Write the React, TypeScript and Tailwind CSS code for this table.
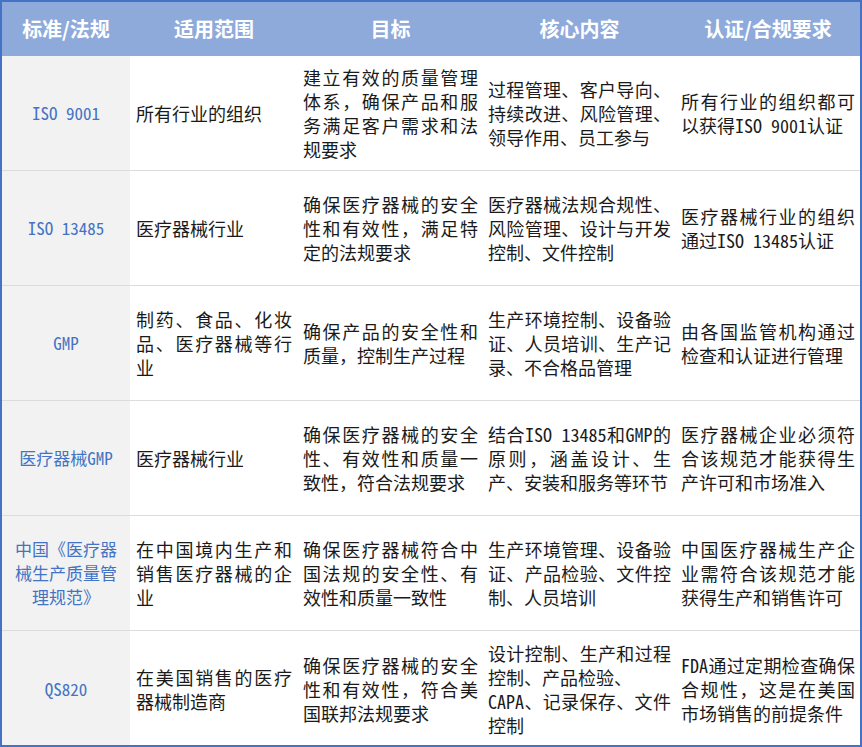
import React from "react";

type Row = { name: string; scope: string; goal: string; core: string; cert: string };

const rows: Row[] = [
  {
    name: "ISO 9001",
    scope: "所有行业的组织",
    goal: "建立有效的质量管理体系，确保产品和服务满足客户需求和法规要求",
    core: "过程管理、客户导向、持续改进、风险管理、领导作用、员工参与",
    cert: "所有行业的组织都可以获得ISO 9001认证",
  },
  {
    name: "ISO 13485",
    scope: "医疗器械行业",
    goal: "确保医疗器械的安全性和有效性，满足特定的法规要求",
    core: "医疗器械法规合规性、风险管理、设计与开发控制、文件控制",
    cert: "医疗器械行业的组织通过ISO 13485认证",
  },
  {
    name: "GMP",
    scope: "制药、食品、化妆品、医疗器械等行业",
    goal: "确保产品的安全性和质量，控制生产过程",
    core: "生产环境控制、设备验证、人员培训、生产记录、不合格品管理",
    cert: "由各国监管机构通过检查和认证进行管理",
  },
  {
    name: "医疗器械GMP",
    scope: "医疗器械行业",
    goal: "确保医疗器械的安全性、有效性和质量一致性，符合法规要求",
    core: "结合ISO 13485和GMP的原则，涵盖设计、生产、安装和服务等环节",
    cert: "医疗器械企业必须符合该规范才能获得生产许可和市场准入",
  },
  {
    name: "中国《医疗器械生产质量管理规范》",
    scope: "在中国境内生产和销售医疗器械的企业",
    goal: "确保医疗器械符合中国法规的安全性、有效性和质量一致性",
    core: "生产环境管理、设备验证、产品检验、文件控制、人员培训",
    cert: "中国医疗器械生产企业需符合该规范才能获得生产和销售许可",
  },
  {
    name: "QS820",
    scope: "在美国销售的医疗器械制造商",
    goal: "确保医疗器械的安全性和有效性，符合美国联邦法规要求",
    core: "设计控制、生产和过程控制、产品检验、\nCAPA、记录保存、文件控制",
    cert: "FDA通过定期检查确保合规性，这是在美国市场销售的前提条件",
  },
];

function T({ s }: { s: string }) {
  const parts = s.split(/([A-Za-z0-9 ]+)/);
  return (
    <>
      {parts.map((p, i) =>
        /^[A-Za-z0-9 ]+$/.test(p) ? (
          <span key={i} className="[font-feature-settings:'hwid']">
            {p}
          </span>
        ) : (
          <React.Fragment key={i}>{p}</React.Fragment>
        )
      )}
    </>
  );
}

const cols = "grid grid-cols-[128px_168px_185px_193px_1fr]";

export default function App() {
  return (
    <div
      className="w-[862px] h-[747px] bg-white border-2 border-[#4472c4] overflow-hidden"
      style={{ fontFamily: '"Noto Sans CJK SC", "Noto Sans", sans-serif' }}
    >
      <div className={`${cols} h-[54px] bg-[#8eaadb] text-white font-bold text-[20px] items-center`}>
        <div className="text-center">标准/法规</div>
        <div className="text-center">适用范围</div>
        <div className="text-center">目标</div>
        <div className="text-center">核心内容</div>
        <div className="text-center">认证/合规要求</div>
      </div>
      {rows.map((r, i) => (
        <div
          key={i}
          className={`${cols} h-[115px] text-[18px] leading-[24px] text-[#1a1a1a] ${
            i < rows.length - 1 ? "border-b border-[#dcdcdc]" : ""
          }`}
        >
          <div className="bg-[#f2f2f2] flex items-center justify-center px-[9px] text-center text-[#4472c4] text-[17px]">
            <span>
              <T s={r.name} />
            </span>
          </div>
          <div className="flex items-center px-[6px]">
            <p className="text-justify w-full">
              <T s={r.scope} />
            </p>
          </div>
          <div className="flex items-center px-[5px]">
            <p className="text-justify w-full">
              <T s={r.goal} />
            </p>
          </div>
          <div className="flex items-center px-[5px]">
            <p className="text-justify w-full whitespace-pre-line">
              <T s={r.core} />
            </p>
          </div>
          <div className="flex items-center px-[5px]">
            <p className="text-justify w-full">
              <T s={r.cert} />
            </p>
          </div>
        </div>
      ))}
    </div>
  );
}
